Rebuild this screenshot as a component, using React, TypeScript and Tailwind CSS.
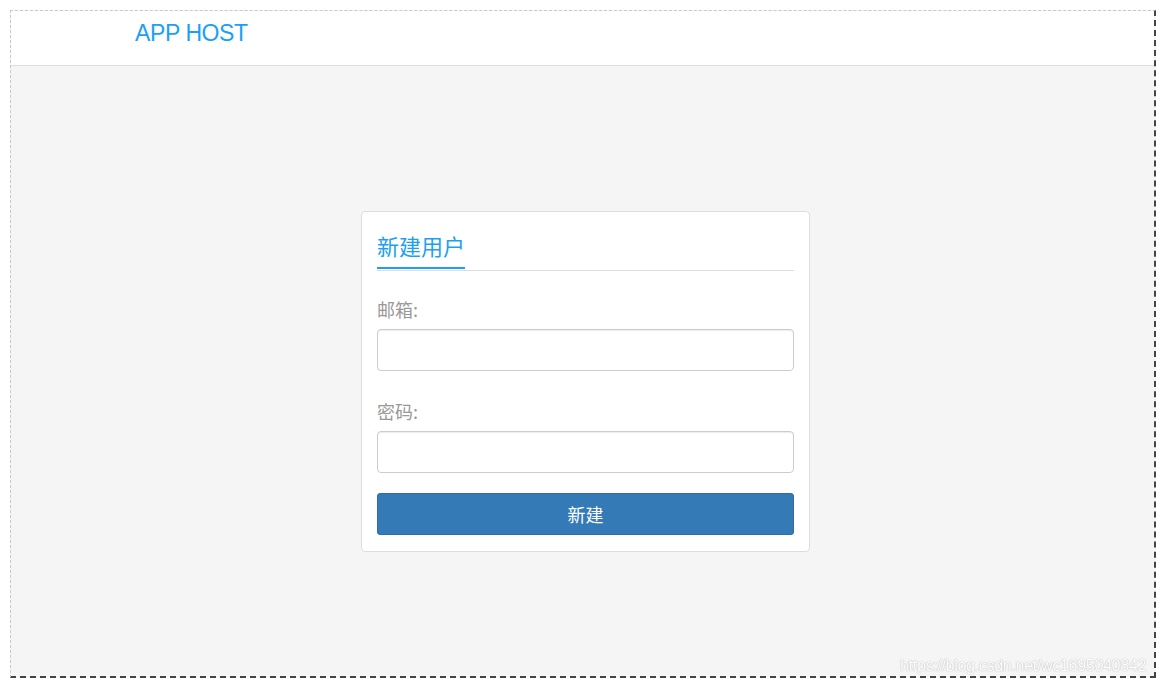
const cjk = { fontFamily: '"Microsoft YaHei", "Noto Sans CJK SC", "Liberation Sans", sans-serif' };

const Field = ({ label, type }: { label: string; type: string }) => (
  <div className="flex flex-col">
    <label className="text-[18px] leading-[27px] text-[#999999]" style={cjk}>
      {label}
    </label>
    <input
      type={type}
      className="mt-[6px] h-[42px] w-full rounded-[4px] border border-[#cccccc] bg-white px-3 outline-none shadow-[inset_0_1px_1px_rgba(0,0,0,0.075)]"
    />
  </div>
);

export default function App() {
  return (
    <div className="h-[686px] w-[1166px] bg-white pt-[10px] pl-[10px] pr-[10px] pb-[8px]">
      <div className="relative flex h-full flex-col overflow-hidden border-t border-l border-dashed border-t-[#c8c8c8] border-l-[#c8c8c8] border-r-2 border-b-2 border-r-[#444] border-b-[#444] bg-[#f5f5f5]">
        <header className="h-[55px] shrink-0 border-b border-[#dddddd] bg-white pl-[124px] pt-[9px]">
          <span
            className="text-[23px] leading-[26px] tracking-[-0.4px] text-[#1aa1f5]"
            style={{ fontFamily: '"Liberation Sans", Arial, sans-serif' }}
          >
            APP HOST
          </span>
        </header>

        <main className="flex flex-1 justify-center pl-[6px] pt-[145px]">
          <div className="h-fit w-[449px] rounded-[4px] border border-[#dddddd] bg-white px-[15px] pt-[17px] pb-[16px]">
            <div className="flex flex-col">
              <div
                className="w-fit border-b-2 border-[#1e9ff2] pb-[5px] text-[22px] leading-[33px] text-[#1e9ff2]"
                style={cjk}
              >
                新建用户
              </div>
              <div className="mt-[1px] h-px bg-[#dddddd]" />
            </div>

            <div className="mt-[25px] flex flex-col gap-[27px]">
              <Field label="邮箱:" type="email" />
              <Field label="密码:" type="password" />
            </div>

            <button
              className="mt-[20px] h-[42px] w-full rounded-[3px] border border-[#2e6da4] bg-[#337ab7] text-[18px] text-white"
              style={cjk}
            >
              新建
            </button>
          </div>
        </main>

        <div
          className="absolute left-[889px] top-[645px] whitespace-nowrap text-[16px] leading-[20px] tracking-[-0.3px] text-white [text-shadow:0_0_1px_#bbb,0_0_1px_#bbb]"
          style={{ fontFamily: '"Liberation Sans", Arial, sans-serif' }}
        >
          https://blog.csdn.net/wc1695040842
        </div>
      </div>
    </div>
  );
}
